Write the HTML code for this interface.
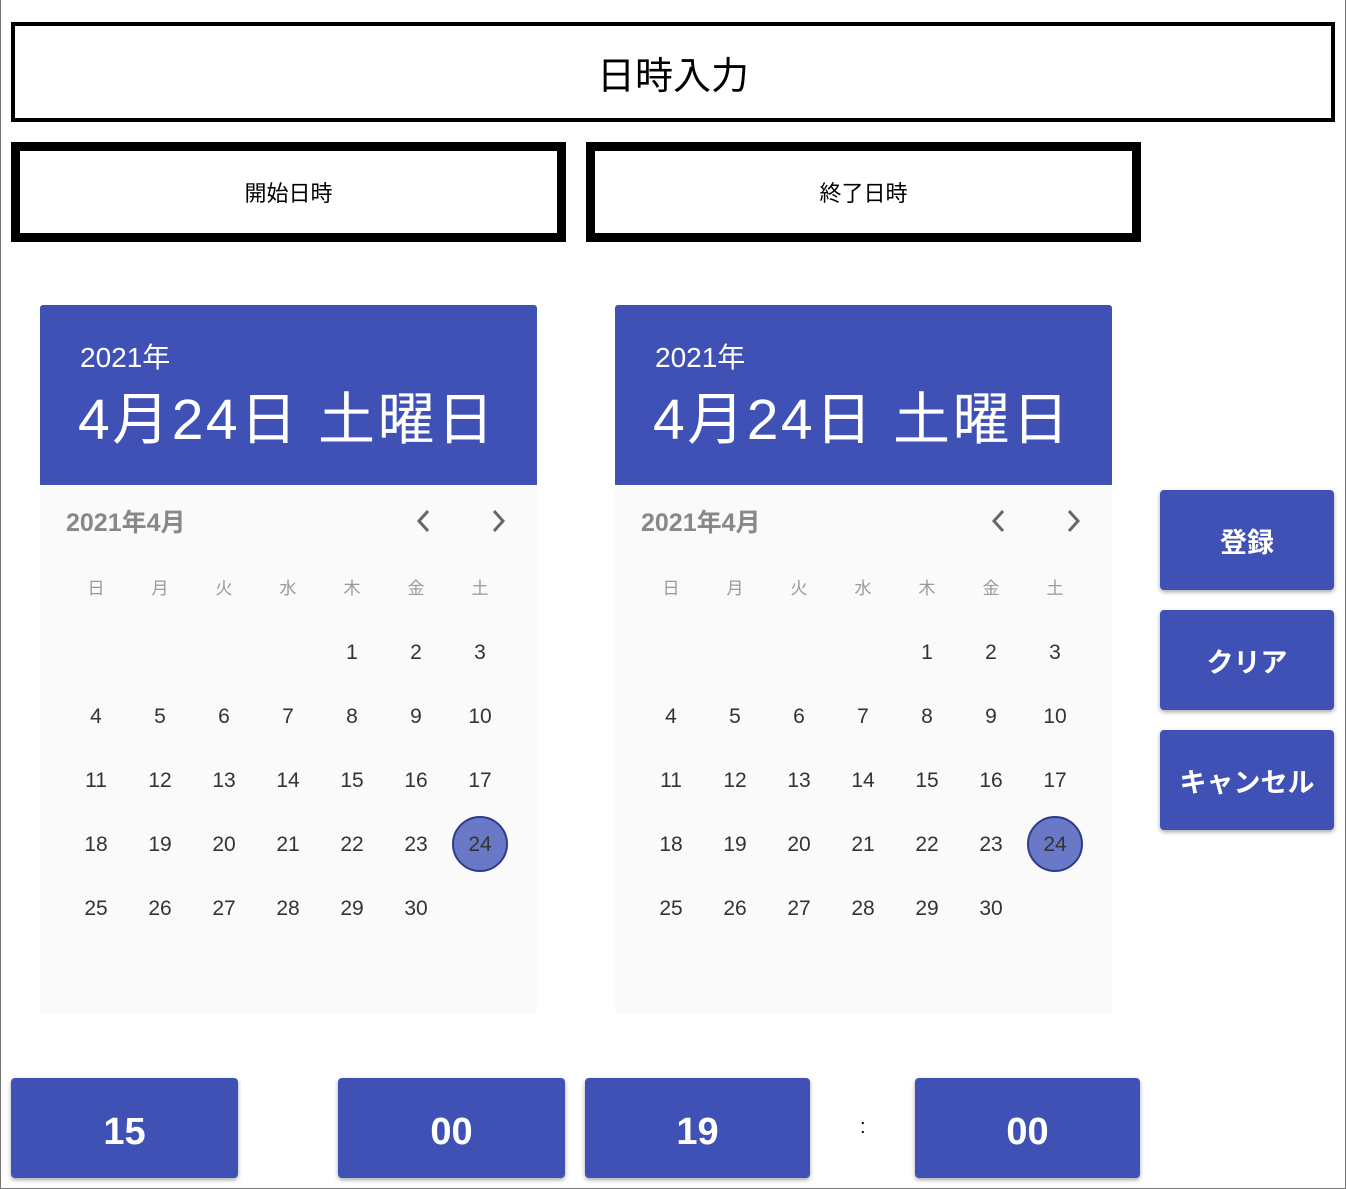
<!DOCTYPE html>
<html><head><meta charset="utf-8"><style>
*{box-sizing:border-box;margin:0;padding:0}
body{width:1346px;height:1189px;background:#fff;position:relative;overflow:hidden;font-family:"Liberation Sans","Noto Sans CJK JP",sans-serif}
.a{position:absolute}
.frame{left:0;top:0;width:1346px;height:1189px;border:1px solid #777;border-top:none}
.title{left:11px;top:22px;width:1324px;height:100px;border:4px solid #000;display:flex;align-items:center;justify-content:center;font-size:38px}
.tab{top:142px;width:555px;height:100px;border:9px solid #000;display:flex;align-items:center;justify-content:center;font-size:22px}
.cal{top:305px;width:497px;height:708px;background:#fafafa;border-radius:3px 3px 0 0;overflow:hidden}
.hd{height:180px;background:#3F51B5;color:#fff;position:relative}
.y{position:absolute;left:40px;top:31px;font-size:28px}
.big{position:absolute;left:38px;top:69px;font-size:57px;letter-spacing:2.5px;white-space:nowrap}
.mo{position:absolute;left:26px;top:198px;font-size:25px;color:#888;font-weight:bold}
.c{position:absolute;width:50px;text-align:center;transform:translateX(-25px)}
.wd{font-size:17px;color:#999;top:269px}
.d{font-size:21px;color:#333}
.sel{position:absolute;left:412px;top:511px;width:56px;height:56px;border-radius:50%;background:#6A79C7;border:2px solid #2d3b8c}
.btn{background:#3F51B5;color:#fff;border-radius:4px;box-shadow:0 2px 4px rgba(0,0,0,.35);display:flex;align-items:center;justify-content:center}
.rb{left:1160px;width:174px;height:100px;font-size:27px;font-weight:bold}
.bb{top:1078px;height:100px;font-size:38px;font-weight:bold;padding-top:8px}
</style></head><body>
<div class="a frame"></div>
<div class="a title">日時入力</div>
<div class="a tab" style="left:11px">開始日時</div>
<div class="a tab" style="left:586px">終了日時</div>

<div class="a cal" style="left:40px" id="c1"></div>
<div class="a cal" style="left:615px" id="c2"></div>

<div class="a btn rb" style="top:490px">登録</div>
<div class="a btn rb" style="top:610px">クリア</div>
<div class="a btn rb" style="top:730px">キャンセル</div>

<div class="a btn bb" style="left:11px;width:227px">15</div>
<div class="a btn bb" style="left:338px;width:227px">00</div>
<div class="a btn bb" style="left:585px;width:225px">19</div>
<div class="a" style="left:860px;top:1116px;font-size:20px">:</div>
<div class="a btn bb" style="left:915px;width:225px">00</div>

<script>
function build(el){
 var h='<div class="hd"><div class="y">2021年</div><div class="big">4月24日 土曜日</div></div>';
 h+='<div class="mo">2021年4月</div>';
 h+='<svg style="position:absolute;left:374px;top:202px" width="20" height="28"><path d="M14 4 L5 14 L14 24" stroke="#666" stroke-width="3" fill="none"/></svg>';
 h+='<svg style="position:absolute;left:448px;top:202px" width="20" height="28"><path d="M6 4 L15 14 L6 24" stroke="#666" stroke-width="3" fill="none"/></svg>';
 var w=['日','月','火','水','木','金','土'];
 for(var i=0;i<7;i++)h+='<div class="c wd" style="left:'+(56+64*i)+'px">'+w[i]+'</div>';
 h+='<div class="sel"></div>';
 for(var d=1;d<=30;d++){var p=d+3,col=p%7,row=Math.floor(p/7);
  h+='<div class="c d" style="left:'+(56+64*col)+'px;top:'+(336+64*row)+'px">'+d+'</div>';}
 el.innerHTML=h;
}
build(document.getElementById('c1'));build(document.getElementById('c2'));
</script>
</body></html>
